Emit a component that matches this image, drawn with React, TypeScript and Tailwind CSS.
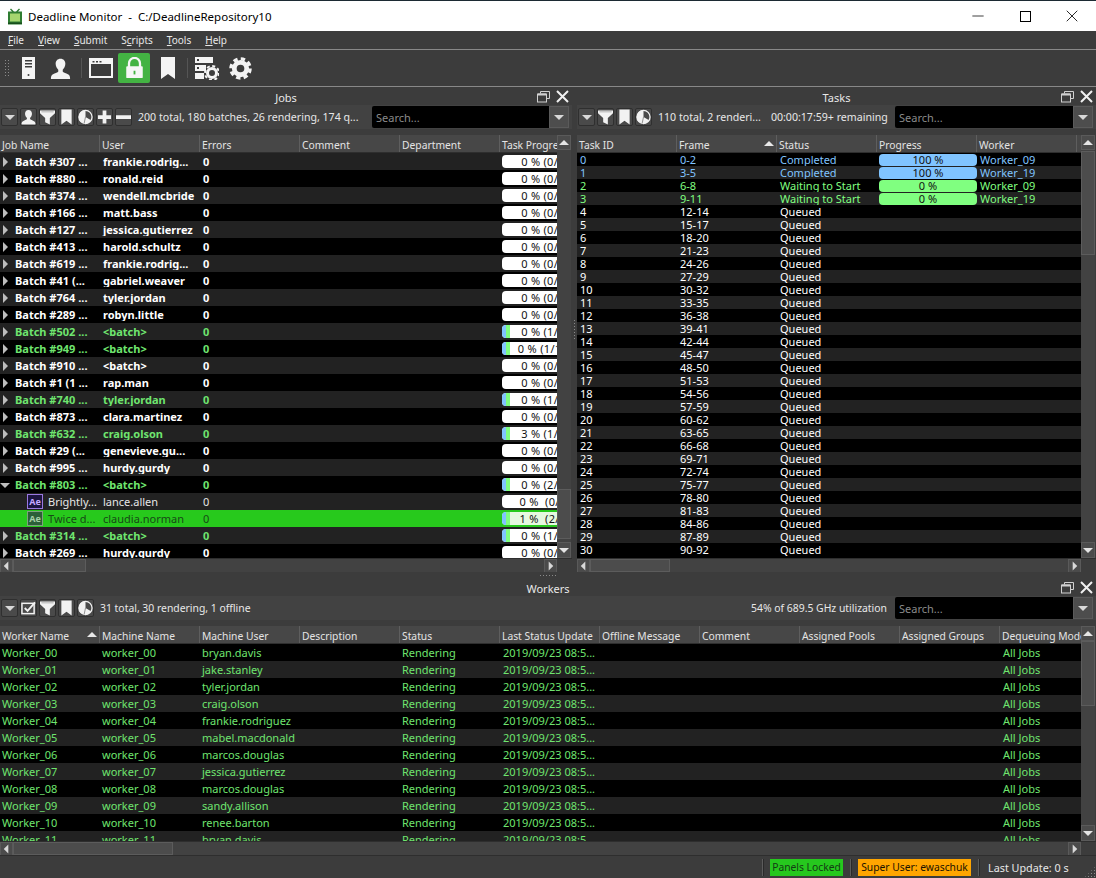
import type { ReactNode } from 'react'
import { Minus, X } from 'lucide-react'

const FONT = "font-['Noto_Sans','Liberation_Sans',sans-serif]"

type Job = {
  name: string
  user: string
  pct: string
  active?: boolean
  kind?: 'child' | 'selected'
  open?: boolean
  fill?: boolean
  tint?: boolean
}

const jobs: Job[] = [
  { name: 'Batch #307 ...', user: 'frankie.rodrig...', pct: '0 % (0/10)' },
  { name: 'Batch #880 ...', user: 'ronald.reid', pct: '0 % (0/10)' },
  { name: 'Batch #374 ...', user: 'wendell.mcbride', pct: '0 % (0/10)' },
  { name: 'Batch #166 ...', user: 'matt.bass', pct: '0 % (0/10)' },
  { name: 'Batch #127 ...', user: 'jessica.gutierrez', pct: '0 % (0/10)' },
  { name: 'Batch #413 ...', user: 'harold.schultz', pct: '0 % (0/10)' },
  { name: 'Batch #619 ...', user: 'frankie.rodrig...', pct: '0 % (0/10)' },
  { name: 'Batch #41 (...', user: 'gabriel.weaver', pct: '0 % (0/10)' },
  { name: 'Batch #764 ...', user: 'tyler.jordan', pct: '0 % (0/10)' },
  { name: 'Batch #289 ...', user: 'robyn.little', pct: '0 % (0/10)' },
  { name: 'Batch #502 ...', user: '<batch>', pct: '0 % (1/20)', active: true, fill: true },
  { name: 'Batch #949 ...', user: '<batch>', pct: '0 % (1/110)', active: true, fill: true },
  { name: 'Batch #910 ...', user: '<batch>', pct: '0 % (0/20)' },
  { name: 'Batch #1 (1 ...', user: 'rap.man', pct: '0 % (0/10)' },
  { name: 'Batch #740 ...', user: 'tyler.jordan', pct: '0 % (1/20)', active: true, fill: true },
  { name: 'Batch #873 ...', user: 'clara.martinez', pct: '0 % (0/20)' },
  { name: 'Batch #632 ...', user: 'craig.olson', pct: '3 % (1/10)', active: true, fill: true },
  { name: 'Batch #29 (...', user: 'genevieve.gu...', pct: '0 % (0/10)' },
  { name: 'Batch #995 ...', user: 'hurdy.gurdy', pct: '0 % (0/10)' },
  { name: 'Batch #803 ...', user: '<batch>', pct: '0 % (2/20)', active: true, open: true, fill: true },
  { name: 'Brightly...', user: 'lance.allen', pct: '0 %  (0/10)', kind: 'child' },
  { name: 'Twice d...', user: 'claudia.norman', pct: '1 %  (2/10)', kind: 'selected', fill: true, tint: true },
  { name: 'Batch #314 ...', user: '<batch>', pct: '0 % (1/20)', active: true, fill: true },
  { name: 'Batch #269 ...', user: 'hurdy.gurdy', pct: '0 % (0/20)' },
]

const workers = [
  ['Worker_00', 'worker_00', 'bryan.davis'],
  ['Worker_01', 'worker_01', 'jake.stanley'],
  ['Worker_02', 'worker_02', 'tyler.jordan'],
  ['Worker_03', 'worker_03', 'craig.olson'],
  ['Worker_04', 'worker_04', 'frankie.rodriguez'],
  ['Worker_05', 'worker_05', 'mabel.macdonald'],
  ['Worker_06', 'worker_06', 'marcos.douglas'],
  ['Worker_07', 'worker_07', 'jessica.gutierrez'],
  ['Worker_08', 'worker_08', 'marcos.douglas'],
  ['Worker_09', 'worker_09', 'sandy.allison'],
  ['Worker_10', 'worker_10', 'renee.barton'],
  ['Worker_11', 'worker_11', 'bryan.davis'],
]

const tasks = Array.from({ length: 31 }, (_, i) => ({
  id: i,
  frame: `${i * 3}-${i * 3 + 2}`,
}))

function Grip({ className }: { className: string }) {
  return <div className={`bg-[radial-gradient(#8a8a8a_1px,transparent_1px)] bg-[length:3px_3px] ${className}`} />
}

function Arrow({ dir, className = 'fill-[#d8d8d8]' }: { dir: 'up' | 'down' | 'left' | 'right'; className?: string }) {
  const pts = {
    up: '1,8 11,8 6,3',
    down: '1,4 11,4 6,9',
    left: '8,1 8,11 3,6',
    right: '4,1 4,11 9,6',
  }[dir]
  return (
    <svg viewBox="0 0 12 12" className={`w-3 h-3 ${className}`}>
      <polygon points={pts} />
    </svg>
  )
}

function ScrollBtn({ dir }: { dir: 'up' | 'down' | 'left' | 'right' }) {
  return (
    <div className="w-[13px] h-[14px] shrink-0 flex items-center justify-center bg-[#4b4b4b] border border-[#5a5a5a]">
      <Arrow dir={dir} />
    </div>
  )
}

function HScroll({ thumb, spacer = 0 }: { thumb: number; spacer?: number }) {
  return (
    <div className="h-[14px] flex shrink-0 items-stretch bg-[#424242] border-t border-[#2e2e2e]">
      <div className="flex-1 flex min-w-0">
        <ScrollBtn dir="left" />
        <div className="h-full bg-[#4c4c4c] border border-[#5c5c5c] shrink-0" style={{ width: thumb }} />
        <div className="flex-1" />
        <ScrollBtn dir="right" />
      </div>
      <div className="shrink-0 bg-[#3c3c3c]" style={{ width: spacer }} />
    </div>
  )
}

function VScroll({ top, height }: { top: number; height: number }) {
  return (
    <div className="w-[14px] shrink-0 flex flex-col bg-[#424242] mr-px">
      <div className="h-[15px] shrink-0 flex items-center justify-center bg-[#4b4b4b] border border-[#5a5a5a]">
        <Arrow dir="up" className="fill-[#e4e4e4]" />
      </div>
      <div className="shrink-0" style={{ height: top }} />
      <div className="shrink-0 bg-[#4c4c4c] border border-[#5c5c5c]" style={{ height }} />
      <div className="flex-1" />
      <div className="h-[16px] shrink-0 flex items-center justify-center bg-[#4b4b4b] border border-[#5a5a5a]">
        <Arrow dir="down" className="fill-[#e4e4e4]" />
      </div>
    </div>
  )
}

function IconBtn({ children }: { children: ReactNode }) {
  return (
    <div className="w-[17px] h-[18px] shrink-0 flex items-center justify-center rounded-[2px] bg-[#4a4a4a] border border-[#2f2f2f] overflow-hidden">
      {children}
    </div>
  )
}

const ic = 'w-[16px] h-[16px] fill-[#f2f2f2]'

const PersonIcon = () => (
  <svg viewBox="0 0 16 16" className={ic}>
    <path d="M8 0.500c2.300 0 3.700 1.700 3.700 3.900 0 2-1 3.600-2 4.500v1.300c0 .6 3 1.400 4.600 2.600.8.600 1.200 1.700 1.200 3.200H.5c0-1.500.4-2.600 1.200-3.200 1.600-1.200 4.600-2 4.600-2.600V8.900c-1-.9-2-2.500-2-4.500C4.300 2.200 5.700.5 8 .5z" />
  </svg>
)
const FilterIcon = () => (
  <svg viewBox="0 0 16 16" className={ic}>
    <path d="M0 1h16v3l-5.500 5v7L5.500 13.500V9L0 4z" />
    <path d="M1.500 2h13v1H1.500z" fill="#9a9a9a" />
  </svg>
)
const BookmarkIcon = () => (
  <svg viewBox="0 0 16 16" className={ic}>
    <path d="M2.500 0h11v16l-5.500-4-5.500 4z" />
  </svg>
)
const PieIcon = () => (
  <svg viewBox="0 0 16 16" className="w-[16px] h-[16px]">
    <circle cx="8" cy="8" r="7" fill="none" stroke="#f2f2f2" strokeWidth="1.400" />
    <path d="M8 8V1A7 7 0 1 0 14 11.500z" fill="#f2f2f2" />
    <path d="M8 8l-1.500 7" stroke="#4a4a4a" strokeWidth="0.600" />
  </svg>
)
const PlusIcon = () => (
  <svg viewBox="0 0 16 16" className={ic}>
    <path d="M6 1h4v5h5v4h-5v5H6v-5H1V6h5z" />
  </svg>
)
const MinusIcon = () => (
  <svg viewBox="0 0 16 16" className={ic}>
    <path d="M0 6h16v4H0z" />
  </svg>
)
const CheckListIcon = () => (
  <svg viewBox="0 0 16 16" className="w-[16px] h-[16px]">
    <rect x="1" y="3" width="13" height="11" fill="none" stroke="#f2f2f2" strokeWidth="1.600" />
    <path d="M4 8l3 3 8-9" fill="none" stroke="#f2f2f2" strokeWidth="2" />
  </svg>
)

function Dropdown() {
  return (
    <IconBtn>
      <Arrow dir="down" className="fill-[#d8d8d8]" />
    </IconBtn>
  )
}

function PanelTitle({ title }: { title: string }) {
  return (
    <div className="h-[18px] pt-[2px] shrink-0 relative flex items-center justify-center text-[#e8e8e8]">
      <span>{title}</span>
      <div className="absolute right-[3px] top-[3px] flex items-center gap-[6px]">
        <svg viewBox="0 0 13 12" className="w-[13px] h-[12px] fill-none stroke-[#d0d0d0]">
          <path d="M3.500 2.500V.5h9v7h-2.500" strokeWidth="1" />
          <rect x="0.500" y="3" width="9" height="8" strokeWidth="1" />
          <path d="M1 3.500h8" strokeWidth="2" />
        </svg>
        <svg viewBox="0 0 13 13" className="w-[13px] h-[13px] stroke-[#f0f0f0]">
          <path d="M1 1l11 11M12 1L1 12" strokeWidth="2" />
        </svg>
      </div>
    </div>
  )
}

function Search({ width }: { width: number }) {
  return (
    <div className="flex h-[22px] shrink-0 mr-[3px]" style={{ width }}>
      <div className="flex-1 bg-black rounded-l-[2px] pl-[4px] flex items-center text-[#8a8a8a]">Search...</div>
      <div className="w-[20px] flex items-center justify-center bg-[#4d4d4d] border border-[#5a5a5a]">
        <Arrow dir="down" />
      </div>
    </div>
  )
}

function Header({ cols, sortAt }: { cols: string[]; sortAt?: number }) {
  return (
    <div className="h-[18px] flex shrink-0 overflow-hidden bg-[#474747] border-b border-[#2e2e2e] text-[#e4e4e4] text-[10.3px]">
      {cols.map((c, i) => (
        <div
          key={c}
          className="w-[100px] shrink-0 pl-[2px] pt-[3px] relative flex items-center border-r border-[#5e5e5e] whitespace-nowrap overflow-hidden"
        >
          {c}
          {i === sortAt && (
            <div className="absolute right-[1px] top-[3px]">
              <Arrow dir="up" className="fill-[#e8e8e8]" />
            </div>
          )}
        </div>
      ))}
    </div>
  )
}

function Pill({ pct, fill, tint }: { pct: string; fill?: boolean; tint?: boolean }) {
  return (
    <div
      className={`w-[96px] h-[13px] pr-[4px] rounded-[4px] overflow-hidden relative flex items-center justify-center font-normal tracking-[0.3px] text-[#111111] ml-[2px] ${tint ? 'bg-[#e6f8e0]' : 'bg-white'}`}
    >
      {fill && (
        <div className="absolute left-0 top-0 h-full w-[8px] flex">
          <div className="w-[4px] bg-[#80c4ff]" />
          <div className="w-[4px] bg-[#80ff80]" />
        </div>
      )}
      <span className="relative whitespace-pre">{pct}</span>
    </div>
  )
}

function JobRow({ job, index }: { job: Job; index: number }) {
  const selected = job.kind === 'selected'
  const child = job.kind !== undefined
  const bg = selected ? 'bg-[#27c91c]' : index % 2 === 0 ? 'bg-[#222222]' : 'bg-black'
  const color = selected ? 'text-[#174a17]' : job.active ? 'text-[#6fe56f]' : child ? 'text-[#e6e6e6]' : 'text-white'
  return (
    <div className={`h-[17px] shrink-0 flex items-center ${bg} ${color} ${child ? '' : 'font-bold'}`}>
      <div className="w-[100px] shrink-0 flex items-center whitespace-nowrap overflow-hidden">
        {child ? (
          <>
            <div
              className={`ml-[27px] w-[16px] h-[15px] shrink-0 border flex items-center justify-center text-[9px] font-bold ${
                selected ? 'border-[#7fa07f] bg-[#2c5f38] text-[#a6d0a6]' : 'border-[#9a78e0] bg-[#1c1440] text-[#c5a8ff]'
              }`}
            >
              Ae
            </div>
            <span className="ml-[5px]">{job.name}</span>
          </>
        ) : (
          <>
            <div className="w-[12px] -ml-[1px] mr-[4px] shrink-0 flex items-center justify-center">
              <Arrow dir={job.open ? 'down' : 'right'} className="fill-[#bdbdbd]" />
            </div>
            <span>{job.name}</span>
          </>
        )}
      </div>
      <div className="w-[100px] shrink-0 pl-[3px] whitespace-nowrap overflow-hidden">{job.user}</div>
      <div className="w-[300px] shrink-0 pl-[3px]">0</div>
      <div className="w-[100px] shrink-0">
        <Pill pct={job.pct} fill={job.fill} tint={job.tint} />
      </div>
    </div>
  )
}

function JobsPanel() {
  return (
    <div className="w-[572px] shrink-0 flex flex-col min-h-0">
      <PanelTitle title="Jobs" />
      <div className="h-[24px] shrink-0 flex items-center gap-[2px] pl-[1px] bg-[#424242] mb-[6px]">
        <Dropdown />
        <IconBtn><PersonIcon /></IconBtn>
        <IconBtn><FilterIcon /></IconBtn>
        <IconBtn><BookmarkIcon /></IconBtn>
        <IconBtn><PieIcon /></IconBtn>
        <IconBtn><PlusIcon /></IconBtn>
        <IconBtn><MinusIcon /></IconBtn>
        <div className="flex-1 pl-[4px] pt-[1px] whitespace-nowrap text-[#e8e8e8] text-[10.6px]">200 total, 180 batches, 26 rendering, 174 q...</div>
        <Search width={197} />
      </div>
      <div className="flex-1 flex min-h-0">
        <div className="flex-1 flex flex-col min-w-0 overflow-hidden">
          <Header cols={['Job Name', 'User', 'Errors', 'Comment', 'Department', 'Task Progress']} />
          <div className="flex-1 flex flex-col overflow-hidden bg-black">
            {jobs.map((j, i) => (
              <JobRow key={j.name + i} job={j} index={i} />
            ))}
          </div>
        </div>
        <VScroll top={339} height={50} />
      </div>
      <HScroll thumb={73} spacer={15} />
    </div>
  )
}

function TasksPanel() {
  return (
    <div className="flex-1 min-w-0 flex flex-col">
      <PanelTitle title="Tasks" />
      <div className="h-[24px] shrink-0 flex items-center gap-[2px] pl-[1px] bg-[#424242] mb-[6px]">
        <Dropdown />
        <IconBtn><FilterIcon /></IconBtn>
        <IconBtn><BookmarkIcon /></IconBtn>
        <IconBtn><PieIcon /></IconBtn>
        <div className="pl-[4px] pt-[1px] whitespace-nowrap text-[#e8e8e8] text-[10.6px]">110 total, 2 renderi...</div>
        <div className="flex-1 pl-[8px] pt-[1px] whitespace-nowrap text-[#e8e8e8] text-[10.6px]">00:00:17:59+ remaining</div>
        <Search width={198} />
      </div>
      <div className="flex-1 flex min-h-0">
        <div className="flex-1 flex flex-col min-w-0 overflow-hidden">
          <Header cols={['Task ID', 'Frame', 'Status', 'Progress', 'Worker']} sortAt={1} />
          <div className="flex-1 flex flex-col overflow-hidden bg-black">
            {tasks.map((t) => {
              const done = t.id < 2
              const waiting = t.id === 2 || t.id === 3
              const color = done ? 'text-[#80c4ff]' : waiting ? 'text-[#80ff80]' : 'text-white'
              return (
                <div
                  key={t.id}
                  className={`h-[13px] shrink-0 flex items-center ${color} ${t.id % 2 === 1 ? 'bg-[#222222]' : 'bg-black'}`}
                >
                  <div className="w-[100px] shrink-0 pl-[3px]">{t.id}</div>
                  <div className="w-[100px] shrink-0 pl-[3px]">{t.frame}</div>
                  <div className="w-[100px] shrink-0 pl-[3px]">
                    {done ? 'Completed' : waiting ? 'Waiting to Start' : 'Queued'}
                  </div>
                  <div className="w-[100px] shrink-0 pl-[2px]">
                    {(done || waiting) && (
                      <div
                        className={`w-[98px] h-[12px] rounded-[4px] flex items-center justify-center text-[#111111] ${done ? 'bg-[#80c4ff]' : 'bg-[#80ff80]'}`}
                      >
                        {done ? '100 %' : '0 %'}
                      </div>
                    )}
                  </div>
                  <div className="w-[100px] shrink-0 pl-[3px]">{done || waiting ? (t.id % 2 === 0 ? 'Worker_09' : 'Worker_19') : ''}</div>
                </div>
              )
            })}
          </div>
        </div>
        <VScroll top={1} height={104} />
      </div>
      <HScroll thumb={80} spacer={15} />
    </div>
  )
}

function WorkersPanel() {
  return (
    <div className="flex-1 min-h-0 flex flex-col">
      <PanelTitle title="Workers" />
      <div className="h-[24px] shrink-0 flex items-center gap-[2px] pl-[1px] bg-[#424242] mb-[6px]">
        <Dropdown />
        <IconBtn><CheckListIcon /></IconBtn>
        <IconBtn><FilterIcon /></IconBtn>
        <IconBtn><BookmarkIcon /></IconBtn>
        <IconBtn><PieIcon /></IconBtn>
        <div className="flex-1 pl-[4px] pt-[1px] whitespace-nowrap text-[#e8e8e8] text-[10.4px]">31 total, 30 rendering, 1 offline</div>
        <div className="pr-[6px] pt-[1px] whitespace-nowrap text-[#e8e8e8] text-[10.4px]">54% of 689.5 GHz utilization</div>
        <Search width={198} />
      </div>
      <div className="flex-1 flex min-h-0">
        <div className="flex-1 flex flex-col min-w-0 overflow-hidden">
          <Header
            cols={[
              'Worker Name',
              'Machine Name',
              'Machine User',
              'Description',
              'Status',
              'Last Status Update',
              'Offline Message',
              'Comment',
              'Assigned Pools',
              'Assigned Groups',
              'Dequeuing Mode',
            ]}
            sortAt={0}
          />
          <div className="flex-1 flex flex-col overflow-hidden bg-black text-[#6fe56f]">
            {workers.map((w, i) => (
              <div key={w[0]} className={`h-[17px] shrink-0 flex items-center ${i % 2 === 1 ? 'bg-[#222222]' : 'bg-black'}`}>
                <div className="w-[100px] shrink-0 pl-[2px]">{w[0]}</div>
                <div className="w-[100px] shrink-0 pl-[2px]">{w[1]}</div>
                <div className="w-[100px] shrink-0 pl-[2px] whitespace-nowrap">{w[2]}</div>
                <div className="w-[100px] shrink-0" />
                <div className="w-[100px] shrink-0 pl-[2px]">Rendering</div>
                <div className="w-[100px] shrink-0 pl-[3px] whitespace-nowrap overflow-hidden">2019/09/23 08:5...</div>
                <div className="w-[400px] shrink-0" />
                <div className="w-[80px] shrink-0 pl-[3px]">All Jobs</div>
              </div>
            ))}
          </div>
        </div>
        <VScroll top={0} height={65} />
      </div>
      <HScroll thumb={160} spacer={15} />
    </div>
  )
}

function StatusBar() {
  const sep = <div className="w-[2px] h-[17px] shrink-0 bg-[#5c5c5c] border-r border-[#2a2a2a]" />
  return (
    <div className="h-[23px] shrink-0 flex items-center justify-end bg-[#3c3c3c] border-t border-[#2e2e2e] relative text-[#e8e8e8]">
      {sep}
      <div className="ml-[6px] w-[73px] h-[17px] flex items-center justify-center bg-[#26c81e] text-[#143b14] text-[10.3px] whitespace-nowrap">Panels Locked</div>
      <div className="ml-[7px]">{sep}</div>
      <div className="ml-[6px] w-[113px] h-[17px] flex items-center justify-center bg-[#ffa500] text-[#1a1200] text-[10.3px] whitespace-nowrap">Super User: ewaschuk</div>
      <div className="ml-[7px]">{sep}</div>
      <div className="ml-[8px] mr-[28px] w-[80px] whitespace-nowrap text-[10.8px]">Last Update: 0 s</div>
      <Grip className="absolute right-0 bottom-0 w-[12px] h-[12px] [clip-path:polygon(100%_0,100%_100%,0_100%)]" />
    </div>
  )
}

export default function App() {
  return (
    <div className={`w-[1096px] h-[878px] flex flex-col overflow-hidden bg-[#3c3c3c] text-[11px] leading-[13px] ${FONT}`}>
      {/* title bar */}
      <div className="h-[31px] shrink-0 flex items-center bg-white border-t border-[#1c2a33] text-black text-[11.5px]">
        <svg viewBox="0 0 16 16" className="w-[16px] h-[17px] ml-[7px]">
          <path d="M4 0l3 3h2l3-3 1 1-2 2h4v13H1V3h4L3 1z" fill="#2f7d32" />
          <rect x="3" y="5" width="10" height="8" fill="#a5d66f" />
          <rect x="1" y="14" width="14" height="1.500" fill="#184d1b" />
        </svg>
        <span className="ml-[5px] whitespace-pre">Deadline Monitor  -  C:/DeadlineRepository10</span>
        <div className="flex-1" />
        <Minus className="w-[18px] h-[18px] mr-[33px]" strokeWidth={1} />
        <div className="w-[11px] h-[11px] border border-black mr-[31px]" />
        <X className="w-[20px] h-[20px] mr-[14px]" strokeWidth={1} />
      </div>

      {/* menu */}
      <div className="h-[19px] shrink-0 flex items-center gap-[14px] pl-[8px] text-[#e8e8e8] border-b border-[#888888] text-[10px]">
        <span><u>F</u>ile</span>
        <span><u>V</u>iew</span>
        <span><u>S</u>ubmit</span>
        <span>S<u>c</u>ripts</span>
        <span><u>T</u>ools</span>
        <span><u>H</u>elp</span>
      </div>

      {/* main toolbar */}
      <div className="h-[37px] shrink-0 flex items-center border-b border-[#888888]">
        <Grip className="ml-[4px] w-[6px] h-[18px]" />
        <svg viewBox="0 0 13 22" className="ml-[12px] w-[13px] h-[22px]">
          <path d="M0 0h13v22H0z" fill="#f4f4f4" />
          <path d="M3 3h7v1.500H3zM3 6h7v1.500H3zM3 9h7v1.500H3z" fill="#3c3c3c" />
          <circle cx="6.500" cy="18" r="1" fill="#3c3c3c" />
        </svg>
        <svg viewBox="0 0 16 16" className="ml-[15px] w-[21px] h-[21px] fill-[#f4f4f4]">
          <path d="M8 0.500c2.300 0 3.700 1.700 3.700 3.900 0 2-1 3.600-2 4.500v1.300c0 .6 3 1.400 4.600 2.600.8.600 1 1.700 1 3.200H.7c0-1.500.2-2.600 1-3.200 1.600-1.200 4.600-2 4.600-2.600V8.900c-1-.9-2-2.500-2-4.500C4.300 2.200 5.700.5 8 .5z" />
        </svg>
        <div className="ml-[10px] w-px h-[20px] bg-[#555555]" />
        <svg viewBox="0 0 24 20" className="ml-[7px] w-[24px] h-[20px]">
          <rect x="1" y="1" width="22" height="18" fill="none" stroke="#f4f4f4" strokeWidth="2" />
          <rect x="1" y="1" width="22" height="5" fill="#f4f4f4" />
          <path d="M3.500 3h2v1.500h-2zM7 3h2v1.500H7zM10.500 3h2v1.500h-2z" fill="#3c3c3c" />
        </svg>
        <div className="ml-[5px] w-[32px] h-[30px] rounded-[2px] bg-[#43b343] flex items-center justify-center">
          <svg viewBox="0 0 20 24" className="w-[19px] h-[22px]">
            <path d="M4 11V7a6 6 0 0 1 12 0v4" fill="none" stroke="#f6f6f6" strokeWidth="2.500" />
            <rect x="1" y="10" width="18" height="13" rx="1" fill="#f6f6f6" />
            <rect x="9" y="15" width="2" height="4" fill="#43b343" />
          </svg>
        </div>
        <svg viewBox="0 0 14 22" className="ml-[11px] w-[14px] h-[22px] fill-[#f4f4f4]">
          <path d="M0 0h14v22l-7-5-7 5z" />
        </svg>
        <div className="ml-[12px] w-px h-[20px] bg-[#555555]" />
        <svg viewBox="0 0 24 24" className="ml-[7px] w-[24px] h-[24px] fill-[#f4f4f4]">
          <path d="M0 1h18v6H0zM0 9h11v6H0zM0 17h9v6H0z" />
          <path d="M2 3h2v2H2zM2 11h2v2H2z" fill="#3c3c3c" />
          <circle cx="17" cy="17" r="4.500" fill="none" stroke="#f4f4f4" strokeWidth="3" />
          <circle cx="17" cy="17" r="7" fill="none" stroke="#f4f4f4" strokeWidth="2" strokeDasharray="3 2.500" />
        </svg>
        <svg viewBox="0 0 24 24" className="ml-[10px] w-[23px] h-[23px]">
          <circle cx="12" cy="12" r="6.500" fill="none" stroke="#f4f4f4" strokeWidth="5" />
          <circle cx="12" cy="12" r="10" fill="none" stroke="#f4f4f4" strokeWidth="3.500" strokeDasharray="4.500 3.350" />
        </svg>
      </div>

      {/* upper panels */}
      <div className="h-[485px] shrink-0 flex">
        <JobsPanel />
        <div className="w-[5px] shrink-0 flex items-center justify-center">
          <Grip className="w-[3px] h-[21px]" />
        </div>
        <TasksPanel />
      </div>

      {/* splitter */}
      <div className="h-[6px] shrink-0 flex items-center justify-center bg-[#3c3c3c]">
        <Grip className="w-[18px] h-[3px]" />
      </div>

      <WorkersPanel />
      <StatusBar />
    </div>
  )
}
